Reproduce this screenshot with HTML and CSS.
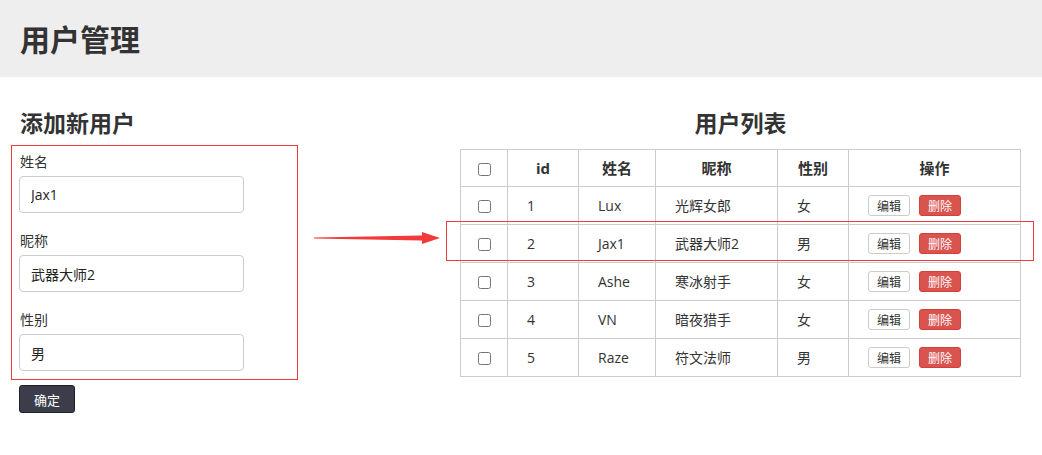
FILE: index.html
```html
<!DOCTYPE html>
<html lang="zh-CN">
<head>
  <meta charset="UTF-8" />
  <meta name="viewport" content="width=device-width, initial-scale=1.0" />
  <title>用户管理</title>
  <link rel="stylesheet" href="styles.css">
</head>
<body>
  <div class="page-header">
    <h1>用户管理</h1>
  </div>

  <div class="main">
    <div class="add-panel">
      <h3>添加新用户</h3>
      <form id="user-form">
        <div class="form-group">
          <label for="name">姓名</label>
          <input type="text" id="name" class="form-control" value="Jax1" />
        </div>
        <div class="form-group">
          <label for="nick">昵称</label>
          <input type="text" id="nick" class="form-control" value="武器大师2" />
        </div>
        <div class="form-group">
          <label for="sex">性别</label>
          <input type="text" id="sex" class="form-control" value="男" />
        </div>
        <button type="button" class="btn-dark">确定</button>
      </form>
    </div>

    <div class="list-panel">
      <h3>用户列表</h3>
      <table class="user-table">
        <colgroup>
          <col style="width:47px" />
          <col style="width:71px" />
          <col style="width:77px" />
          <col style="width:122px" />
          <col style="width:71px" />
          <col />
        </colgroup>
        <thead>
          <tr>
            <th class="col-check"><input type="checkbox" /></th>
            <th>id</th>
            <th>姓名</th>
            <th>昵称</th>
            <th>性别</th>
            <th>操作</th>
          </tr>
        </thead>
        <tbody id="user-list"></tbody>
      </table>
    </div>

    <!-- annotations -->
    <div class="mark mark-form"></div>
    <div class="mark mark-row"></div>
    <svg class="arrow" width="130" height="16" viewBox="0 0 130 16">
      <polygon points="0,7.6 108,5.5 108,2 126,8 108,14 108,10.5 0,8.4" fill="#f23a3a" />
    </svg>
  </div>

  <script>
    const users = [
      { id: 1, name: "Lux", nick: "光辉女郎", sex: "女" },
      { id: 2, name: "Jax1", nick: "武器大师2", sex: "男" },
      { id: 3, name: "Ashe", nick: "寒冰射手", sex: "女" },
      { id: 4, name: "VN", nick: "暗夜猎手", sex: "女" },
      { id: 5, name: "Raze", nick: "符文法师", sex: "男" }
    ];

    function renderUsers() {
      const list = document.getElementById("user-list");
      list.innerHTML = "";
      users.forEach((u) => {
        const tr = document.createElement("tr");
        tr.innerHTML = `
          <td class="col-check"><input type="checkbox" /></td>
          <td>${u.id}</td>
          <td>${u.name}</td>
          <td>${u.nick}</td>
          <td>${u.sex}</td>
          <td><div class="ops"><button class="btn-xs btn-default">编辑</button><button class="btn-xs btn-danger">删除</button></div></td>
        `;
        list.appendChild(tr);
      });
    }

    renderUsers();
  </script>
</body>
</html>
```

FILE: styles.css
```css
body {
  margin: 0;
  font-family: "Open Sans", "Noto Sans CJK SC", sans-serif;
  font-size: 14px;
  color: #333;
  background: #fff;
}
h1, h3 {
  margin: 0;
  font-family: "Noto Sans CJK SC", sans-serif;
  font-weight: bold;
}
.page-header {
  background: #eeeeee;
  height: 77px;
  padding-left: 20px;
  box-sizing: border-box;
}
.page-header h1 {
  font-size: 30px;
  line-height: 76px;
}
.main {
  position: relative;
  display: flex;
}
.add-panel {
  width: 460px;
  padding: 0 20px 0 19px;
  box-sizing: border-box;
}
.add-panel h3, .list-panel h3 {
  font-size: 23px;
  line-height: 28px;
  margin-top: 31px;
  margin-bottom: 14px;
}
.add-panel h3 {
  margin-left: 1px;
}
.list-panel h3 {
  text-align: center;
  margin-bottom: 13px;
}
#user-form {
  padding-top: 1px;
}
.form-group {
  margin-bottom: 17px;
}
.form-group label {
  display: block;
  margin-left: 1px;
  font-family: "Noto Sans CJK SC", sans-serif;
  line-height: 20px;
  margin-bottom: 5px;
}
.form-control {
  display: block;
  width: 225px;
  height: 37px;
  padding: 0 11px;
  box-sizing: border-box;
  border: 1px solid #ccc;
  border-radius: 4px;
  font-family: "Open Sans", "Noto Sans CJK SC", sans-serif;
  font-size: 14px;
  color: #222;
}
.form-group:last-of-type {
  margin-bottom: 14px;
}
.btn-dark {
  display: block;
  height: 28px;
  padding: 0 14px;
  background: #3b3e4a;
  border: 1px solid #1e2028;
  border-radius: 3px;
  color: #fff;
  font-family: "Noto Sans CJK SC", sans-serif;
  font-size: 13px;
}
.list-panel {
  width: 561px;
}
.user-table {
  width: 561px;
  border-collapse: collapse;
  table-layout: fixed;
}
.user-table th, .user-table td {
  border: 1px solid #cccccc;
  padding: 8px 19px;
  line-height: 20px;
  text-align: left;
  font-weight: normal;
  white-space: nowrap;
}
.user-table td {
  height: 21px;
  padding-top: 8px;
  padding-bottom: 8px;
  box-sizing: content-box;
}
.user-table th {
  text-align: center;
  font-weight: bold;
  font-size: 15px;
}
.user-table .col-check {
  text-align: center;
  padding: 0;
}
.user-table input[type="checkbox"] {
  margin: 0;
  vertical-align: -2px;
}
.ops {
  display: flex;
  gap: 9px;
}
.btn-xs {
  height: 21px;
  padding: 0 8px;
  font-size: 12px;
  line-height: 19px;
  font-family: "Noto Sans CJK SC", sans-serif;
  border-radius: 3px;
  border: 1px solid #ccc;
  box-sizing: border-box;
}
.btn-default {
  background: #fff;
  color: #333;
}
.btn-danger {
  background: #d9534f;
  border-color: #d43f3a;
  color: #fff;
}
.mark {
  position: absolute;
  border: 1px solid #f23a3a;
  box-sizing: border-box;
}
.mark-form {
  left: 11px;
  top: 68px;
  width: 287px;
  height: 235px;
}
.mark-row {
  left: 446px;
  top: 144px;
  width: 588px;
  height: 40px;
}
.arrow {
  position: absolute;
  left: 314px;
  top: 153px;
}
```
